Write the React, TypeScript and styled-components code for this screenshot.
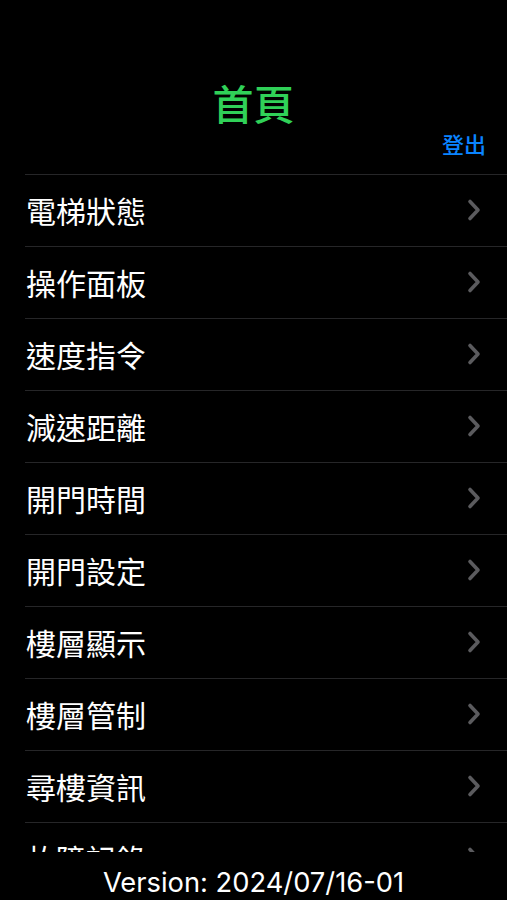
import React from "react";
import styled, { createGlobalStyle } from "styled-components";

const GlobalStyle = createGlobalStyle`
  html, body {
    margin: 0;
    padding: 0;
    background: #000;
  }
  body {
    font-family: "Noto Sans CJK TC", "Noto Sans", sans-serif;
  }
`;

const Page = styled.div`
  width: 507px;
  height: 900px;
  background: #000;
  display: flex;
  flex-direction: column;
  overflow: hidden;
`;

const Header = styled.header`
  display: flex;
  flex-direction: column;
  padding-top: 81px;
  height: 174px;
  box-sizing: border-box;
`;

const Title = styled.h1`
  margin: 0;
  text-align: center;
  font-size: 41px;
  line-height: 42px;
  font-weight: 500;
  color: #30d158;
  font-family: "Noto Sans CJK TC", sans-serif;
`;

const LogoutRow = styled.div`
  display: flex;
  justify-content: flex-end;
  padding-right: 21px;
  margin-top: 9px;
`;

const LogoutButton = styled.button`
  background: none;
  border: none;
  padding: 0;
  font-size: 22px;
  line-height: 22px;
  font-weight: 500;
  color: #0a84ff;
  font-family: "Noto Sans CJK TC", sans-serif;
  cursor: pointer;
`;

const List = styled.ul`
  list-style: none;
  margin: 0 0 0 25px;
  padding: 0;
  flex: 1;
  overflow: hidden;
`;

const Row = styled.li`
  height: 72px;
  box-sizing: border-box;
  border-top: 1px solid #262628;
  display: flex;
  align-items: center;
  justify-content: space-between;
  padding: 0 25px 2px 1px;
`;

const RowLabel = styled.span`
  font-size: 30px;
  line-height: 1;
  font-weight: 400;
  color: #fff;
  font-family: "Noto Sans CJK TC", sans-serif;
`;

const Footer = styled.footer`
  height: 48px;
  display: flex;
  align-items: flex-end;
  justify-content: center;
  padding-bottom: 1px;
  box-sizing: border-box;
`;

const Version = styled.span`
  font-family: Inter, "Liberation Sans", sans-serif;
  font-size: 27.3px;
  line-height: 32px;
  color: #fff;
`;

const Chevron = () => (
  <svg width="16" height="24" viewBox="0 0 16 24" fill="none">
    <path
      d="M4 3.5 L12 12 L4 20.5"
      stroke="#5b5b5e"
      strokeWidth="3.6"
      strokeLinecap="round"
      strokeLinejoin="round"
    />
  </svg>
);

const items = [
  "電梯狀態",
  "操作面板",
  "速度指令",
  "減速距離",
  "開門時間",
  "開門設定",
  "樓層顯示",
  "樓層管制",
  "尋樓資訊",
  "故障記錄",
];

export default function App() {
  return (
    <>
      <GlobalStyle />
      <Page>
        <Header>
          <Title>首頁</Title>
          <LogoutRow>
            <LogoutButton>登出</LogoutButton>
          </LogoutRow>
        </Header>
        <List>
          {items.map((label) => (
            <Row key={label}>
              <RowLabel>{label}</RowLabel>
              <Chevron />
            </Row>
          ))}
        </List>
        <Footer>
          <Version>Version: 2024/07/16-01</Version>
        </Footer>
      </Page>
    </>
  );
}
